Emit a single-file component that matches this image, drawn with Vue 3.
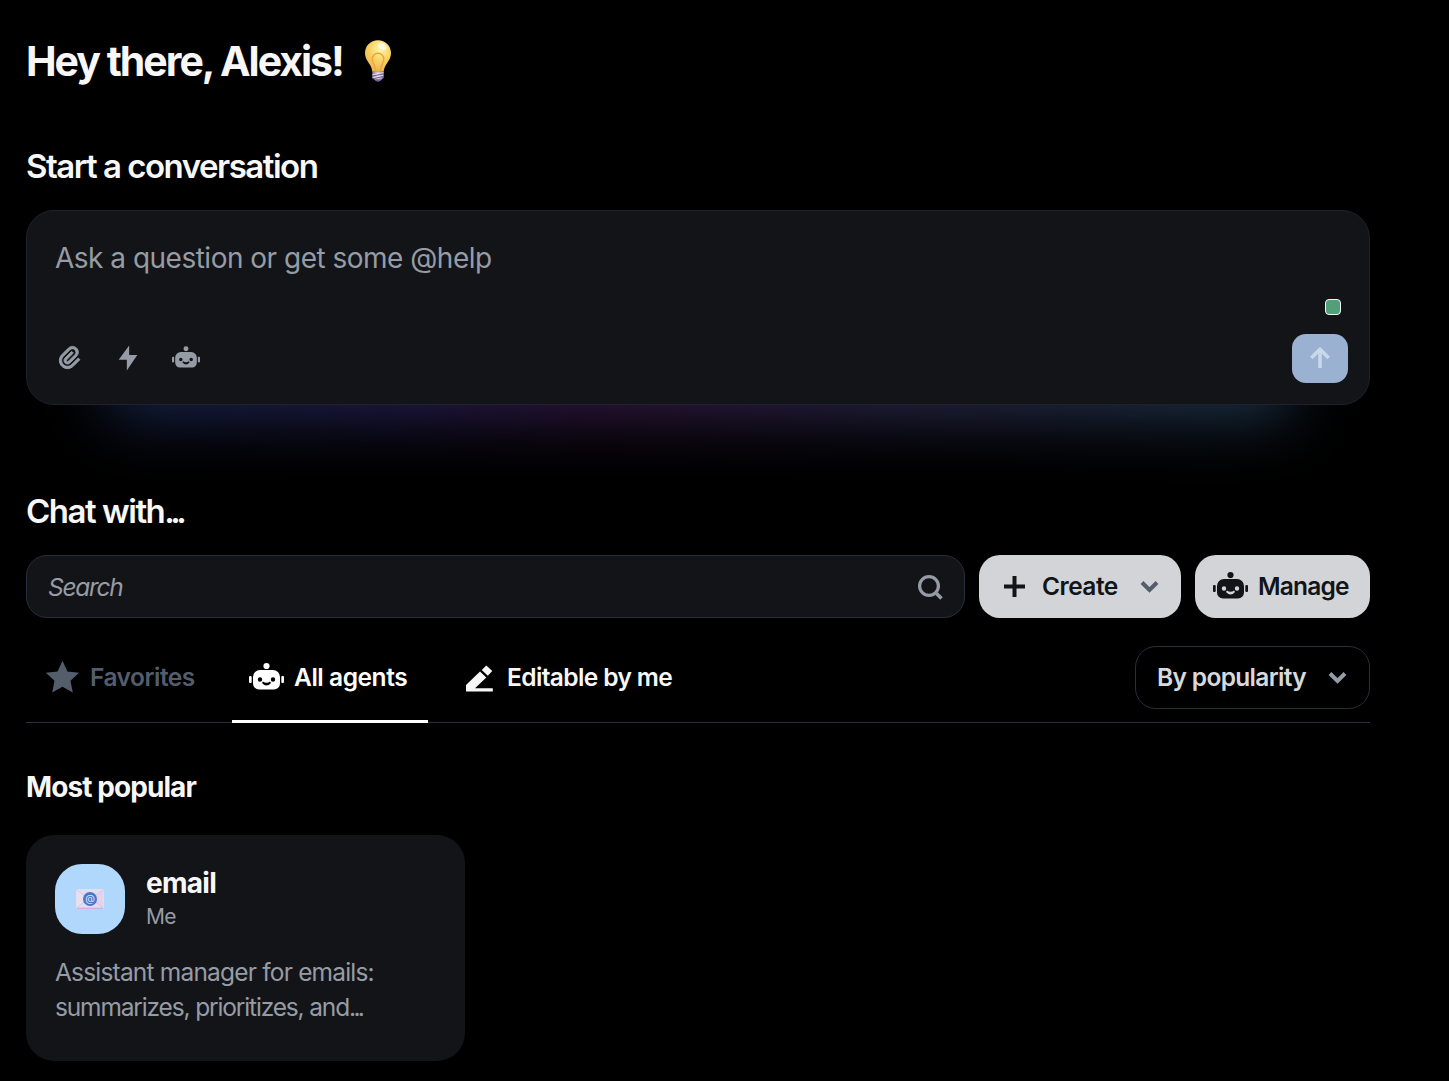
<template>
  <div class="page">
    <svg class="sprite" aria-hidden="true">
      <symbol id="robot" viewBox="0 0 35 35">
        <circle cx="17.5" cy="6" r="3.1" />
        <rect x="0" y="16" width="2.7" height="7" rx="1" />
        <rect x="32.3" y="16" width="2.7" height="7" rx="1" />
        <path
          fill-rule="evenodd"
          d="M11 10h13a7 7 0 0 1 7 7v6.5a6 6 0 0 1-6 6H10a6 6 0 0 1-6-6V17a7 7 0 0 1 7-7ZM11 17.3a2.2 2.2 0 1 0 0 4.4 2.2 2.2 0 0 0 0-4.4ZM24 17.3a2.2 2.2 0 1 0 0 4.4 2.2 2.2 0 0 0 0-4.4ZM13 23q4.5 5 9 0l-.9-1.5q-3.600 2.600-7.200 0Z"
        />
      </symbol>
      <symbol id="chevron" viewBox="0 0 20 14">
        <path d="M2 2.500 9.500 10l7.500-7.500" fill="none" stroke="currentColor" stroke-width="4" />
      </symbol>
    </svg>

    <h1 class="greeting">
      <span>Hey there, {{ userName }}!</span>
      <svg class="bulb" viewBox="0 0 28 42">
        <defs>
          <radialGradient id="glass" cx="0.6" cy="0.25" r="0.75">
            <stop offset="0" stop-color="#fff6b8" />
            <stop offset="0.45" stop-color="#fbda6a" />
            <stop offset="1" stop-color="#efb44a" />
          </radialGradient>
          <linearGradient id="cap" x1="0" x2="1">
            <stop offset="0" stop-color="#8b7a9c" />
            <stop offset="0.5" stop-color="#d9cfe2" />
            <stop offset="1" stop-color="#85739a" />
          </linearGradient>
        </defs>
        <path d="M14 .3C6.600.3 1 5.900 1 13.100c0 4.900 2.400 7.800 4.800 11.500 1.500 2.400 2.200 4.700 2.500 7.100h11.400c.3-2.400 1-4.700 2.500-7.100C24.600 20.900 27 18 27 13.100 27 5.900 21.400.3 14 .3Z" fill="url(#glass)" />
        <path d="M11.800 31.500c0-5-3.600-8.500-3.600-12.500a5.800 5.800 0 0 1 11.600 0c0 4-3.600 7.500-3.600 12.500" fill="none" stroke="#eaa440" stroke-width="1.400" />
        <ellipse cx="18.500" cy="6.500" rx="4.400" ry="3" fill="#fffbe6" opacity=".85" transform="rotate(32 18.500 6.500)" />
        <path d="M8.300 31.600h11.400v6.200l-3.200 2.800q-2.500 1.400-5 0l-3.200-2.800Z" fill="url(#cap)" />
        <path d="m8.300 36 11.400-2.200M8.600 38.800l10.800-2.400" stroke="#74628c" stroke-width="1" />
        <path d="m8.300 34.800 11.400-2.200M8.500 37.600l11-2.400" stroke="#eee9f2" stroke-width=".8" />
        <path d="M11 39.300h6l-1 1.600q-2 1-4 0Z" fill="#7d5ca3" />
      </svg>
    </h1>

    <h2 class="section-title">Start a conversation</h2>
    <div class="composer-wrap">
      <div class="composer-glow"></div>
      <div class="composer">
        <div class="composer-placeholder">Ask a question or get some @help</div>
        <span class="status-dot"></span>
        <div class="composer-bar">
          <div class="composer-tools">
            <button class="tool" aria-label="Attach">
              <svg class="icon-clip" viewBox="0 0 24 24">
                <path d="M14.8287 7.75737L9.1718 13.4142C8.78127 13.8047 8.78127 14.4379 9.1718 14.8284C9.56232 15.219 10.1955 15.219 10.586 14.8284L16.2429 9.17158C17.4144 8.00001 17.4144 6.10052 16.2429 4.92894C15.0713 3.75737 13.1718 3.75737 12.0002 4.92894L6.34337 10.5858C4.39075 12.5384 4.39075 15.7042 6.34337 17.6569C8.29599 19.6095 11.4618 19.6095 13.4144 17.6569L19.0713 12L20.4855 13.4142L14.8287 19.0711C12.095 21.8047 7.66283 21.8047 4.92916 19.0711C2.19549 16.3374 2.19549 11.9053 4.92916 9.17158L10.586 3.51473C12.5386 1.56211 15.7045 1.56211 17.6571 3.51473C19.6097 5.46735 19.6097 8.63317 17.6571 10.5858L12.0002 16.2426C10.8287 17.4142 8.92916 17.4142 7.75759 16.2426C6.58602 15.0711 6.58602 13.1716 7.75759 12L13.4144 6.34316L14.8287 7.75737Z" />
              </svg>
            </button>
            <button class="tool" aria-label="Actions">
              <svg viewBox="0 0 24 24"><path d="M13 9.500h7L11 22.700v-9.200H4L13 1.300Z" /></svg>
            </button>
            <button class="tool" aria-label="Agents">
              <svg><use href="#robot" /></svg>
            </button>
          </div>
          <button class="send" aria-label="Send">
            <svg viewBox="0 0 24 24">
              <path d="M12 23V4M3.300 13 12 4.300l8.700 8.700" fill="none" stroke="currentColor" stroke-width="3.600" />
            </svg>
          </button>
        </div>
      </div>
    </div>

    <h2 class="section-title">Chat with<span class="dots">...</span></h2>
    <div class="search-row">
      <div class="search">
        <span>Search</span>
        <svg viewBox="0 0 26 26">
          <circle cx="12" cy="12" r="9.400" fill="none" stroke="currentColor" stroke-width="3.200" />
          <path d="m19.500 19.500 5 5" stroke="currentColor" stroke-width="3.600" />
        </svg>
      </div>
      <button class="btn btn-create">
        <svg class="icon-plus" viewBox="0 0 21 21">
          <path d="M10.500 0v21M0 10.500h21" stroke="currentColor" stroke-width="4" />
        </svg>
        <span>Create</span>
        <svg class="icon-chevron"><use href="#chevron" /></svg>
      </button>
      <button class="btn btn-manage">
        <svg class="icon-robot"><use href="#robot" /></svg>
        <span>Manage</span>
      </button>
    </div>

    <div class="tabs">
      <button
        v-for="tab in tabs"
        :key="tab.id"
        class="tab"
        :class="[`tab-${tab.id}`, { active: activeTab === tab.id }]"
        :disabled="tab.disabled"
        @click="activeTab = tab.id"
      >
        <svg v-if="tab.id === 'favorites'" viewBox="0 0 24 24">
          <path d="M12.0006 18.26L4.94715 22.2082L6.52248 14.2799L0.587891 8.7918L8.61493 7.84006L12.0006 0.5L15.3862 7.84006L23.4132 8.7918L17.4787 14.2799L19.054 22.2082L12.0006 18.26Z" />
        </svg>
        <svg v-else-if="tab.id === 'all'"><use href="#robot" /></svg>
        <svg v-else viewBox="0 0 35 35">
          <path d="M4 31.500v-6.500L18 11.500l6.300 6L13 28.200h17.800v3.300ZM24.300 5.500l6 5.400-4.500 4.800-6-5.700Z" />
        </svg>
        <span>{{ tab.label }}</span>
      </button>
      <button class="sort">
        <span>By popularity</span>
        <svg class="icon-chevron"><use href="#chevron" /></svg>
      </button>
    </div>

    <h3 class="list-title">Most popular</h3>
    <div class="cards">
      <article v-for="agent in agents" :key="agent.name" class="card">
        <div class="card-head">
          <div class="avatar">
            <svg viewBox="0 0 28 20">
              <rect width="28" height="20" rx="1.500" fill="#e4dcef" />
              <path d="m1 1 13 9L1 19Z" fill="#eadff0" />
              <path d="m27 1-13 9 13 9Z" fill="#e3d3ec" />
              <path d="m.5 19 11-8.500M27.500 19l-11-8.500M.5 1l13.500 9L27.500 1" fill="none" stroke="#cdbfdb" stroke-width=".7" />
              <path d="M1 19.300h26" stroke="#d8aee8" stroke-width="1.400" />
              <circle cx="14" cy="10" r="7" fill="#4a76cb" />
              <text x="14" y="13.300" text-anchor="middle">@</text>
            </svg>
          </div>
          <div class="card-title">
            <div class="card-name">{{ agent.name }}</div>
            <div class="card-author">{{ agent.author }}</div>
          </div>
        </div>
        <p class="card-text">
          {{ agent.summary }}
          <span class="card-more">{{ agent.details }}<span class="dots">...</span></span>
        </p>
      </article>
    </div>
  </div>
</template>

<script setup>
import { ref } from 'vue'

const userName = 'Alexis'
const activeTab = ref('all')

const tabs = [
  { id: 'favorites', label: 'Favorites', disabled: true },
  { id: 'all', label: 'All agents' },
  { id: 'editable', label: 'Editable by me' }
]

const agents = [
  {
    name: 'email',
    author: 'Me',
    summary: 'Assistant manager for emails:',
    details: 'summarizes, prioritizes, and'
  }
]
</script>

<style>
body {
  background: #000;
}
</style>

<style scoped>
.page {
  box-sizing: border-box;
  width: 1449px;
  height: 1081px;
  padding: 32px 79px 0 26px;
  overflow: hidden;
  background: #000;
  color: #f7f7f7;
  font-family: Inter, 'Liberation Sans', sans-serif;
  font-size: 24.5px;
  letter-spacing: -0.03em;
}

.sprite {
  display: block;
  width: 0;
  height: 0;
}

svg {
  fill: currentColor;
  flex: none;
}

button {
  box-sizing: border-box;
  margin: 0;
  padding: 0;
  border: none;
  background: none;
  color: inherit;
  font: inherit;
  font-weight: 640;
  letter-spacing: inherit;
  cursor: pointer;
}

.dots {
  letter-spacing: -0.11em;
}

.greeting {
  display: flex;
  align-items: center;
  gap: 21px;
  height: 58px;
  margin: 0 0 55px;
  font-size: 41px;
  font-weight: 650;
  letter-spacing: -0.049em;
}

.bulb {
  width: 28px;
  height: 42px;
}

.section-title {
  height: 42px;
  margin: 53px 0 23px;
  line-height: 42px;
  font-size: 33px;
  font-weight: 640;
  letter-spacing: -0.045em;
}

.section-title .dots {
  letter-spacing: -0.14em;
}

.composer-wrap {
  position: relative;
  margin-bottom: 85px;
}

.composer-glow {
  position: absolute;
  inset: 85px 82px -12px;
  background: linear-gradient(90deg, #16264a, #241f52 24%, #351844 42%, #2a2448 62%, #242e4a 82%, #1d364c);
  filter: blur(31px);
}

.composer {
  position: relative;
  display: flex;
  flex-direction: column;
  box-sizing: border-box;
  height: 195px;
  padding: 28px 21px 21px 28px;
  border: 1px solid #1f222c;
  border-radius: 28px;
  background: #131418;
}

.composer-placeholder {
  line-height: 38px;
  font-size: 28px;
  letter-spacing: -0.018em;
  color: #969ca5;
}

.status-dot {
  align-self: flex-end;
  box-sizing: border-box;
  width: 16px;
  height: 16px;
  margin: 22px 7px 0 0;
  border: 1px solid #f2f6f4;
  border-radius: 4px;
  background: #52a079;
}

.composer-bar {
  display: flex;
  justify-content: space-between;
  align-items: center;
  margin-top: auto;
}

.composer-tools {
  display: flex;
  gap: 30px;
  margin: 0 0 2px 1px;
  color: #969ca5;
}

.tool {
  display: flex;
  align-items: center;
  justify-content: center;
  width: 28px;
  height: 28px;
}

.tool svg {
  width: 28px;
  height: 28px;
}

.tool .icon-clip {
  stroke: currentColor;
  stroke-width: 0.8;
}

.send {
  display: flex;
  align-items: center;
  justify-content: center;
  width: 56px;
  height: 49px;
  border-radius: 14px;
  background: #9ab1d2;
  color: #c9d8eb;
}

.send svg {
  width: 24px;
  height: 24px;
  margin-bottom: 3px;
}

.search-row {
  display: flex;
  gap: 14px;
}

.search {
  display: flex;
  flex: 1;
  align-items: center;
  justify-content: space-between;
  box-sizing: border-box;
  height: 63px;
  padding: 0 21px;
  border: 1px solid #2a2e3c;
  border-radius: 21px;
  background: #131418;
  color: #969ca5;
  font-style: italic;
  letter-spacing: -0.053em;
}

.search svg {
  width: 26px;
  height: 26px;
}

.btn {
  display: flex;
  align-items: center;
  height: 63px;
  border-radius: 21px;
  background: #d3d4d8;
  color: #111418;
  font-weight: 620;
  letter-spacing: -0.033em;
}

.btn span,
.sort span {
  margin-bottom: 2px;
}

.btn-create {
  width: 202px;
  padding: 0 21px 0 25px;
  letter-spacing: -0.022em;
}

.btn-create span {
  margin-left: 17px;
}

.btn-manage {
  width: 175px;
  gap: 10px;
  padding-left: 18px;
}

.icon-plus {
  width: 21px;
  height: 21px;
}

.icon-robot {
  width: 35px;
  height: 35px;
}

.icon-chevron {
  width: 20px;
  height: 14px;
  margin-left: auto;
  color: #545d6c;
}

.tabs {
  display: flex;
  height: 76px;
  margin-top: 28px;
  border-bottom: 1px solid #2a2f3e;
}

.tab {
  display: flex;
  align-items: center;
  gap: 10px;
  height: 77px;
  padding: 0 20px 12px 17px;
  border-bottom: 3px solid transparent;
  color: #f7f7f7;
  letter-spacing: -0.025em;
}

.tab svg {
  width: 35px;
  height: 35px;
}

.tab-favorites {
  width: 206px;
  padding-left: 19px;
  color: #545d6c;
  font-weight: 560;
  letter-spacing: -0.02em;
}

.tab-all {
  width: 196px;
  letter-spacing: -0.018em;
}

.tab-editable {
  width: 270px;
  padding-left: 34px;
}

.tab.active {
  border-bottom-color: #fff;
  color: #fff;
}

.sort {
  display: flex;
  align-items: center;
  width: 235px;
  height: 63px;
  margin-left: auto;
  padding: 0 21px;
  border: 1px solid #2a2e3c;
  border-radius: 21px;
  color: #d8d9dc;
  font-weight: 620;
  letter-spacing: -0.027em;
}

.sort .icon-chevron {
  color: #969ca5;
}

.list-title {
  height: 36px;
  margin: 46px 0 30px;
  line-height: 36px;
  font-size: 28px;
  font-weight: 650;
  letter-spacing: -0.033em;
}

.cards {
  display: flex;
  gap: 14px;
}

.card {
  box-sizing: border-box;
  width: 439px;
  height: 226px;
  padding: 29px;
  border-radius: 28px;
  background: #131418;
}

.card-head {
  display: flex;
  gap: 21px;
}

.avatar {
  display: flex;
  align-items: center;
  justify-content: center;
  width: 70px;
  height: 70px;
  border-radius: 27px;
  background: #b0d8fc;
}

.avatar svg {
  width: 28px;
  height: 20px;
}

.avatar text {
  fill: #dfe8fa;
  font-size: 10px;
  letter-spacing: 0;
}

.card-name {
  margin-top: 2px;
  line-height: 34px;
  font-size: 28px;
  font-weight: 650;
}

.card-author {
  line-height: 33px;
  font-size: 21px;
  color: #969ca5;
}

.card-text {
  margin: 21px 0 0;
  line-height: 35px;
  letter-spacing: -0.033em;
  color: #969ca5;
}

.card-more {
  display: block;
  letter-spacing: -0.047em;
}
</style>
